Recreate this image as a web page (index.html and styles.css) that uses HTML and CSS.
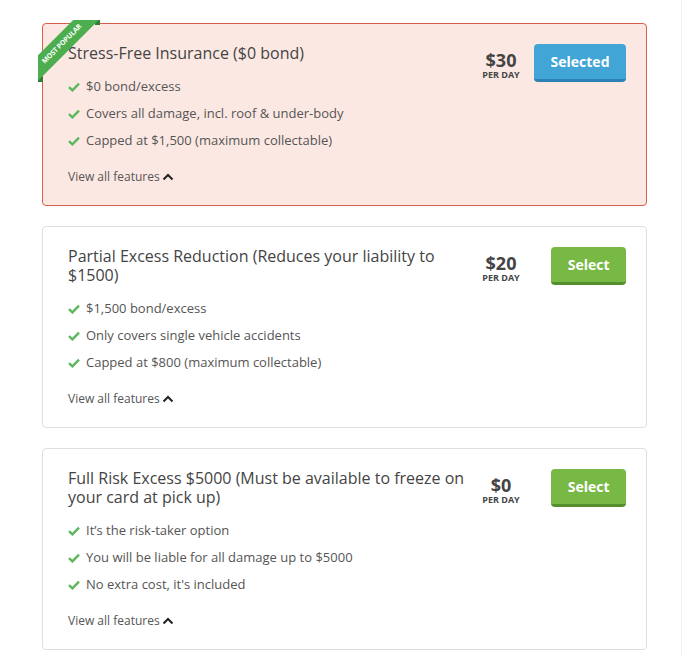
FILE: index.html
```html
<!DOCTYPE html>
<html lang="en">
<head>
  <meta charset="UTF-8" />
  <meta name="viewport" content="width=device-width, initial-scale=1" />
  <title>Choose your protection</title>
  <link rel="stylesheet" href="styles.css">
</head>
<body>

<main class="page">

  <!-- Paket 1: paling populer, sudah dipilih -->
  <div class="option selected">
    <div class="ribbon"><span>Most Popular</span></div>
    <div class="option-info">
      <h3>Stress-Free Insurance ($0 bond)</h3>
      <ul class="features">
        <li><svg class="check" viewBox="0 0 12 10"><path d="M1 5.2 L4.4 8.4 L11 1.6"/></svg>$0 bond/excess</li>
        <li><svg class="check" viewBox="0 0 12 10"><path d="M1 5.2 L4.4 8.4 L11 1.6"/></svg>Covers all damage, incl. roof &amp; under-body</li>
        <li><svg class="check" viewBox="0 0 12 10"><path d="M1 5.2 L4.4 8.4 L11 1.6"/></svg>Capped at $1,500 (maximum collectable)</li>
      </ul>
      <a class="view-all" href="#">View all features<svg class="chev" viewBox="0 0 12 8"><path d="M1.5 6.5 L6 2 L10.5 6.5"/></svg></a>
    </div>
    <div class="price">
      <strong>$30</strong>
      <span>PER DAY</span>
    </div>
    <div class="action">
      <button class="btn btn-blue">Selected</button>
    </div>
  </div>

  <div class="option">
    <div class="option-info">
      <h3>Partial Excess Reduction (Reduces your liability to $1500)</h3>
      <ul class="features">
        <li><svg class="check" viewBox="0 0 12 10"><path d="M1 5.2 L4.4 8.4 L11 1.6"/></svg>$1,500 bond/excess</li>
        <li><svg class="check" viewBox="0 0 12 10"><path d="M1 5.2 L4.4 8.4 L11 1.6"/></svg>Only covers single vehicle accidents</li>
        <li><svg class="check" viewBox="0 0 12 10"><path d="M1 5.2 L4.4 8.4 L11 1.6"/></svg>Capped at $800 (maximum collectable)</li>
      </ul>
      <a class="view-all" href="#">View all features<svg class="chev" viewBox="0 0 12 8"><path d="M1.5 6.5 L6 2 L10.5 6.5"/></svg></a>
    </div>
    <div class="price">
      <strong>$20</strong>
      <span>PER DAY</span>
    </div>
    <div class="action">
      <button class="btn btn-green">Select</button>
    </div>
  </div>

  <div class="option">
    <div class="option-info">
      <h3>Full Risk Excess $5000 (Must be available to freeze on your card at pick up)</h3>
      <ul class="features">
        <li><svg class="check" viewBox="0 0 12 10"><path d="M1 5.2 L4.4 8.4 L11 1.6"/></svg>It’s the risk-taker option</li>
        <li><svg class="check" viewBox="0 0 12 10"><path d="M1 5.2 L4.4 8.4 L11 1.6"/></svg>You will be liable for all damage up to $5000</li>
        <li><svg class="check" viewBox="0 0 12 10"><path d="M1 5.2 L4.4 8.4 L11 1.6"/></svg>No extra cost, it's included</li>
      </ul>
      <a class="view-all" href="#">View all features<svg class="chev" viewBox="0 0 12 8"><path d="M1.5 6.5 L6 2 L10.5 6.5"/></svg></a>
    </div>
    <div class="price">
      <strong>$0</strong>
      <span>PER DAY</span>
    </div>
    <div class="action">
      <button class="btn btn-green">Select</button>
    </div>
  </div>

</main>

</body>
</html>
```

FILE: styles.css
```css
body {
  font-family: "Open Sans", Arial, sans-serif;
  margin: 0;
  background-color: #fff;
  color: #555;
}
.page {
  width: 605px;
  min-height: 656px;
  padding: 23px 34px 0 42px;
  border-right: 1px solid #f2f2f2;
  box-sizing: content-box;
}
.option {
  position: relative;
  display: flex;
  align-items: flex-start;
  background-color: white;
  border: 1px solid #dedede;
  border-radius: 4px;
  padding: 20px 20px 19px 25px;
  margin-bottom: 20px;
}
.option.selected {
  background-color: #fce8e3;
  border-color: #d6604c;
}
.option-info {
  flex: 1;
  min-width: 0;
}
.option-info h3 {
  margin: 0;
  font-size: 16px;
  font-weight: normal;
  line-height: 19px;
  color: #444;
}
.features {
  list-style-type: none;
  padding-left: 0;
  margin: 10px 0 0;
}
.features li {
  display: flex;
  align-items: center;
  font-size: 13px;
  line-height: 27px;
  color: #555;
}
.check {
  width: 12px;
  height: 10px;
  margin-right: 6px;
  fill: none;
  stroke: #5cb85c;
  stroke-width: 2.4;
}
.view-all {
  display: inline-flex;
  align-items: center;
  margin-top: 15px;
  font-size: 12px;
  line-height: 16px;
  color: #555;
  text-decoration: none;
}
.chev {
  width: 12px;
  height: 8px;
  margin-left: 2px;
  fill: none;
  stroke: #222;
  stroke-width: 2;
}
.price {
  width: 60px;
  margin-top: 7px;
  text-align: center;
  color: #444;
}
.price strong {
  display: block;
  font-size: 18px;
  line-height: 19px;
}
.price span {
  display: block;
  font-size: 9px;
  line-height: 9px;
  font-weight: bold;
}
.action {
  width: 95px;
  text-align: right;
}
.btn {
  font-family: "Open Sans", Arial, sans-serif;
  font-size: 14px;
  font-weight: bold;
  color: white;
  height: 38px;
  padding: 0 16.5px;
  border: none;
  border-radius: 4px;
  cursor: pointer;
}
.btn-blue {
  background-color: #41a5d6;
  border-bottom: 3px solid #2d82b5;
}
.btn-green {
  background-color: #77b944;
  border-bottom: 3px solid #558f2d;
}

/* pita "most popular" di pojok kiri atas */
.ribbon {
  position: absolute;
  top: -4px;
  left: -5px;
  width: 62px;
  height: 62px;
  overflow: hidden;
}
.ribbon::before,
.ribbon::after {
  content: "";
  position: absolute;
  width: 5px;
  height: 5px;
  background-color: #2f7d32;
}
.ribbon::before {
  top: 0;
  right: 0;
}
.ribbon::after {
  bottom: 0;
  left: 0;
}
.ribbon span {
  position: absolute;
  z-index: 1;
  left: -26px;
  top: 15px;
  width: 100px;
  height: 18px;
  line-height: 18px;
  background-color: #4cae4f;
  color: white;
  font-size: 7px;
  font-weight: bold;
  text-align: center;
  text-transform: uppercase;
  letter-spacing: -0.2px;
  transform: rotate(-45deg);
}
```
